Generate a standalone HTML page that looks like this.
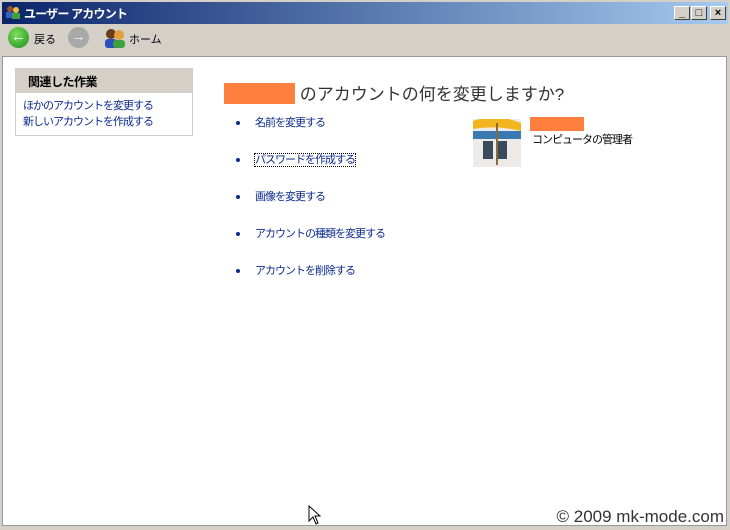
<!DOCTYPE html>
<html><head><meta charset="utf-8"><style>
*{margin:0;padding:0;box-sizing:border-box}
body{width:730px;height:530px;background:#d4d0c8;font-family:"Liberation Sans","Noto Sans CJK JP",sans-serif;font-size:11px;position:relative;overflow:hidden}
.title{position:absolute;left:0;top:0;width:730px;height:24px;background:linear-gradient(90deg,#0a246a,#a6caf0);border:2px solid #d4d0c8;border-bottom:none}
.title span{position:absolute;left:22px;top:3px;color:#fff;font-weight:bold;font-size:12px;letter-spacing:-0.8px}
.btn{position:absolute;top:4px;width:16px;height:14px;background:#d4d0c8;border:1px solid;border-color:#fff #404040 #404040 #fff;font-size:11px;line-height:12px;text-align:center;font-weight:bold;color:#000}
.tb{position:absolute;left:2px;top:24px;width:726px;height:32px;background:#d4d0c8}
.circ{position:absolute;top:27px;width:21px;height:21px;border-radius:50%;color:#fff;font-size:15px;text-align:center;line-height:20px;font-weight:bold}
.content{position:absolute;left:2px;top:56px;width:725px;height:470px;background:#fff;border:1px solid #999}
.panel{position:absolute;left:15px;top:68px;width:178px;height:68px;border:1px solid #ccc;background:#fff}
.ph{height:24px;background:#d4d0c8;font-weight:bold;padding:4px 12px;font-size:12px;letter-spacing:-0.5px}
.panel a{display:block;color:#0b2a8c;padding-left:7px;line-height:16px;font-size:11px;letter-spacing:-1px}
.h{position:absolute;left:224px;top:80px;font-size:17px;color:#333;letter-spacing:0px}
.or{background:#ff7f3f;display:inline-block}
.li{position:absolute;left:236px;color:#0b2a8c;font-size:11px;letter-spacing:-1px}
.li b{display:inline-block;width:4px;height:4px;background:#0b2a8c;border-radius:50%;margin-right:15px;vertical-align:middle}
.copy{position:absolute;right:6px;top:507px;font-size:17px;color:#333}
</style></head><body>
<div class="title"><svg style="position:absolute;left:3px;top:3px" width="16" height="14"><circle cx="5" cy="4" r="3" fill="#a0522d"/><rect x="1" y="7" width="8" height="6" fill="#3060c0"/><circle cx="11" cy="5" r="3" fill="#f0c040"/><rect x="7" y="8" width="8" height="6" fill="#40a040"/></svg><span>ユーザー アカウント</span>
<div class="btn" style="left:672px">_</div><div class="btn" style="left:689px">□</div><div class="btn" style="left:708px">×</div></div>
<div class="tb"></div>
<div class="circ" style="left:8px;background:radial-gradient(circle at 40% 35%,#7de05a,#1d8a1d)">←</div>
<span style="position:absolute;left:34px;top:31px;font-size:11px">戻る</span>
<div class="circ" style="left:68px;background:#a9a9a9;color:#eee">→</div>
<svg style="position:absolute;left:103px;top:27px" width="24" height="22"><circle cx="8" cy="7" r="5" fill="#6b3b1a"/><rect x="2" y="12" width="12" height="9" rx="3" fill="#2a50c0"/><circle cx="16" cy="8" r="5" fill="#e0a040"/><rect x="10" y="13" width="12" height="8" rx="3" fill="#40a040"/></svg>
<span style="position:absolute;left:129px;top:31px;font-size:11px">ホーム</span>
<div class="content"></div>
<div class="panel"><div class="ph">関連した作業</div><div style="padding-top:5px"><a>ほかのアカウントを変更する</a><a>新しいアカウントを作成する</a></div></div>
<div class="h"><span class="or" style="width:71px;height:21px;vertical-align:-4px"></span> のアカウントの何を変更しますか?</div>
<div class="li" style="top:114px"><b></b>名前を変更する</div>
<div class="li" style="top:151px"><b></b><span style="outline:1px dotted #000">パスワードを作成する</span></div>
<div class="li" style="top:188px"><b></b>画像を変更する</div>
<div class="li" style="top:225px"><b></b>アカウントの種類を変更する</div>
<div class="li" style="top:262px"><b></b>アカウントを削除する</div>
<svg style="position:absolute;left:473px;top:119px" width="48" height="48"><rect width="48" height="48" fill="#eeeae8"/><rect y="12" width="48" height="8" fill="#3a7ab0"/><path d="M0 2 Q24 -6 48 4 L48 12 Q24 6 0 10Z" fill="#f2b51e"/><rect x="10" y="22" width="10" height="18" fill="#3a4a5a"/><rect x="24" y="22" width="10" height="18" fill="#3a4a5a"/><line x1="24" y1="4" x2="24" y2="46" stroke="#8a6a3a" stroke-width="2"/></svg>
<div class="or" style="position:absolute;left:530px;top:117px;width:54px;height:14px"></div>
<div style="position:absolute;left:532px;top:131px;font-size:11px;letter-spacing:-1px">コンピュータの管理者</div>
<div class="copy">© 2009 mk-mode.com</div>
<svg style="position:absolute;left:308px;top:505px" width="13" height="20"><path d="M1 1 L1 16 L5 12 L8 19 L10 18 L7 11 L12 11 Z" fill="#fff" stroke="#000"/></svg>
</body></html>
